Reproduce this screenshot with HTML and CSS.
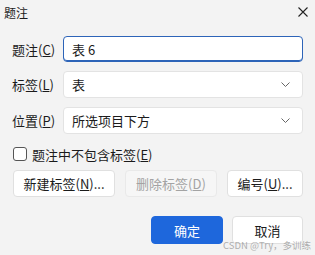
FILE: index.html
```html
<!DOCTYPE html>
<html lang="zh-CN">
<head>
    <meta charset="UTF-8">
    <meta name="viewport" content="width=device-width, initial-scale=1.0">
    <title>题注</title>
    <link rel="stylesheet" href="styles.css">
</head>
<body>
    <div class="dialog">
        <div class="titlebar">
            <span class="title">题注</span>
            <svg class="close" width="10" height="10" viewBox="0 0 10 10">
                <path d="M0.5 0.5 L9.5 9.5 M9.5 0.5 L0.5 9.5" stroke="#222" stroke-width="1.1" fill="none"/>
            </svg>
        </div>

        <div class="content">
            <div class="row">
                <label class="label">题注(<u>C</u>)</label>
                <div class="field focused">表 6</div>
            </div>
            <div class="row">
                <label class="label">标签(<u>L</u>)</label>
                <div class="field select">
                    <span>表</span>
                    <svg class="chevron" width="9" height="5" viewBox="0 0 9 5"><path d="M0.5 0.5 L4.5 4.5 L8.5 0.5" stroke="#666" stroke-width="1" fill="none"/></svg>
                </div>
            </div>
            <div class="row">
                <label class="label">位置(<u>P</u>)</label>
                <div class="field select">
                    <span>所选项目下方</span>
                    <svg class="chevron" width="9" height="5" viewBox="0 0 9 5"><path d="M0.5 0.5 L4.5 4.5 L8.5 0.5" stroke="#666" stroke-width="1" fill="none"/></svg>
                </div>
            </div>

            <div class="check-row">
                <span class="checkbox"></span>
                <span>题注中不包含标签(<u>E</u>)</span>
            </div>

            <div class="btn-row">
                <button class="btn btn-new">新建标签(<u>N</u>)...</button>
                <button class="btn btn-del" disabled>删除标签(<u>D</u>)</button>
                <button class="btn btn-num">编号(<u>U</u>)...</button>
            </div>

            <div class="footer">
                <button class="btn btn-ok">确定</button>
                <button class="btn btn-cancel">取消</button>
            </div>
        </div>

        <div class="watermark">CSDN @Try，多训练</div>
    </div>
</body>
</html>
```

FILE: styles.css
```css
body {
    margin: 0;
    padding: 0;
    background: #f3f3f3;
    font-family: "Noto Sans CJK SC", "Noto Sans", sans-serif;
    color: #1b1b1b;
    font-size: 13px;
}
.dialog {
    position: relative;
    width: 315px;
    height: 255px;
    overflow: hidden;
}
.titlebar {
    height: 24px;
    display: flex;
    align-items: center;
    justify-content: space-between;
    padding: 0 7px 0 4px;
}
.title {
    font-size: 12px;
}
.content {
    padding: 12px 12px 0 12px;
}
.row {
    display: flex;
    align-items: center;
    margin-bottom: 9px;
}
.label {
    width: 51px;
    flex-shrink: 0;
}
.field {
    flex: 1;
    height: 25px;
    background: #fff;
    border: 1px solid #e3e3e3;
    border-radius: 4px;
    display: flex;
    align-items: center;
    padding: 0 12px 0 8px;
}
.focused {
    height: 24px;
    border: 1px solid #2d64b8;
    box-shadow: inset 0 -1px 0 #2d64b8;
}
.select {
    justify-content: space-between;
}
.check-row {
    display: flex;
    align-items: center;
    gap: 5px;
    margin-top: 12px;
    height: 16px;
    padding-left: 1px;
}
.checkbox {
    width: 12px;
    height: 12px;
    border: 1px solid #555;
    border-radius: 3px;
    background: #fff;
}
.btn-row {
    display: flex;
    gap: 10px;
    margin-top: 8px;
    padding-left: 1px;
}
.btn {
    height: 27px;
    background: #fff;
    border: 1px solid #e0e0e0;
    border-radius: 4px;
    font-family: inherit;
    font-size: 13px;
    color: #1b1b1b;
    padding: 0;
}
.btn-new {
    width: 102px;
}
.btn-del {
    width: 92px;
    background: #f6f6f6;
    color: #a3a3a3;
    border-color: #e9e9e9;
}
.btn-num {
    width: 76px;
}
.footer {
    display: flex;
    justify-content: flex-end;
    gap: 9px;
    margin-top: 19px;
}
.btn-ok {
    width: 72px;
    height: 28px;
    background: #1e67dc;
    border-color: #1e67dc;
    color: #fff;
}
.btn-cancel {
    width: 71px;
    height: 28px;
}
.watermark {
    position: absolute;
    left: 223px;
    top: 238px;
    font-size: 9.5px;
    color: rgba(150, 150, 150, 0.75);
    white-space: nowrap;
}
```
